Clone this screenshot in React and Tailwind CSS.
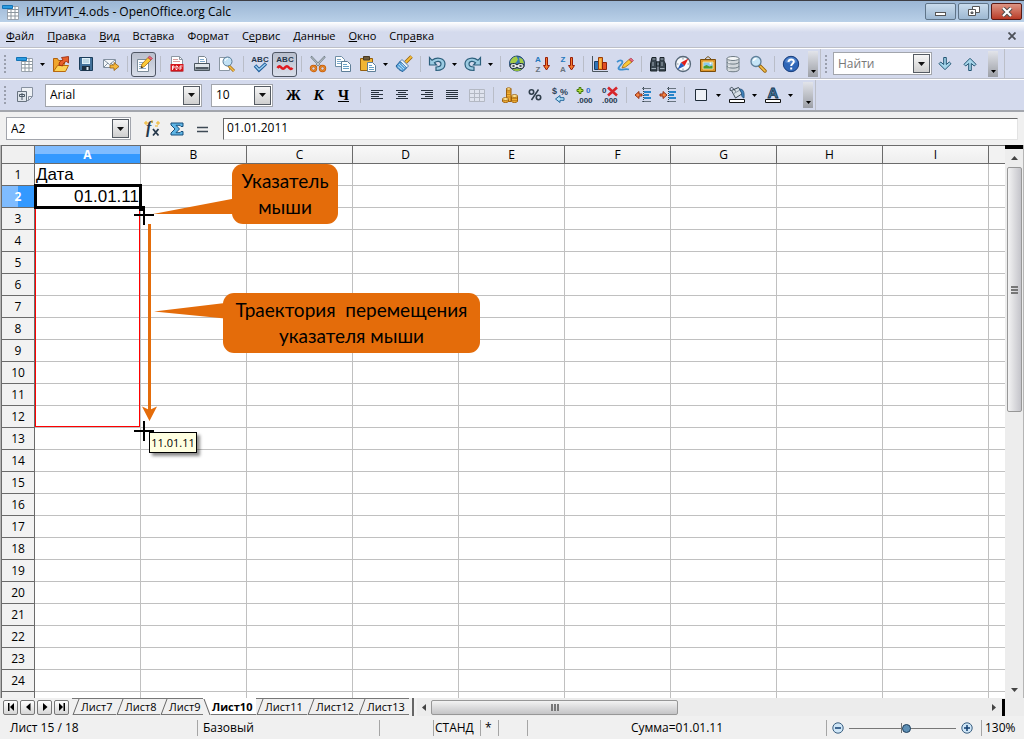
import React from "react";

const Icon = ({ children, size = "size-[18px]" }) => (
  <svg viewBox="0 0 18 18" className={`${size} shrink-0 overflow-visible`} fill="none" aria-hidden="true">
    {children}
  </svg>
);

const Caret = () => (
  <svg viewBox="0 0 7 4" className="h-1 w-[7px] shrink-0" aria-hidden="true">
    <path d="M0 0h7L3.500 4z" fill="#111" />
  </svg>
);

const glyphFont = "Liberation Sans, sans-serif";

const icons = {
  new: (
    <Icon>
      <path d="M5.500 3.500h11v13h-11z" fill="#fff" stroke="#9aa3ad" />
      <path d="M5.500 6.500h11M5.500 9.500h11M5.500 13h11M9 3.500v13M13 3.500v13" stroke="#8d979f" />
      <path d="M.5 2.500h10v3H.5z" fill="#2b9be0" stroke="#1373b5" />
    </Icon>
  ),
  open: (
    <Icon>
      <path d="M1.500 16.500V3.500h4l1 2h6v4" fill="#f0a52b" stroke="#b0600e" />
      <path d="M1.500 16.500l4-6h11l-3 6z" fill="#fcd253" stroke="#b8690f" />
      <path d="M7 10c0-3 1.500-4.500 4-5L9.500 2.500 16.500 1.500v6.500l-2-1.500C12 7 11 8.500 10.500 11z" fill="#e8612a" stroke="#972307" strokeWidth=".8" />
    </Icon>
  ),
  save: (
    <Icon>
      <path d="M2.500 2.500h13v13h-12l-1-1z" fill="#42719a" stroke="#1b3d5a" />
      <path d="M5 3h8v6H5z" fill="#dff0f8" />
      <path d="M6 5h6M6 7h6" stroke="#9ec1d4" />
      <path d="M5 11h8v4.500H5z" fill="#1c2f40" />
      <path d="M9.500 12h2v3h-2z" fill="#dce8ef" />
    </Icon>
  ),
  mail: (
    <Icon>
      <path d="M1.500 4.500h12v8h-12z" fill="#f4f7fa" stroke="#8290a0" />
      <path d="M2 5l5.500 4.500L13 5M2 12l4-4M13 12L9 8" stroke="#8290a0" />
      <path d="M8 10h4V7.500L17 11.500 12 15.500V13H8z" fill="#f6b83c" stroke="#98600e" strokeWidth=".8" />
    </Icon>
  ),
  edit: (
    <Icon>
      <path d="M2.500 4.500h11v12h-11z" fill="#fff" stroke="#7b8b99" />
      <path d="M4 7.500h6M4 9.500h5M4 11.500h4M4 13.500h7" stroke="#8fb0cb" />
      <path d="M6 13l1-4 6-6.500 3 2.500-6.500 6.500z" fill="#fbc938" stroke="#a56a12" strokeWidth=".8" />
      <path d="M13 2.500l1.500-1.500 3 2.500L16 5z" fill="#e8677b" stroke="#a33145" strokeWidth=".6" />
      <path d="M6 13l.6-2 1.500 1.500z" fill="#222" />
    </Icon>
  ),
  pdf: (
    <Icon>
      <path d="M3.500 1.500h8l3 3v12h-11z" fill="#fff" stroke="#8b97a3" />
      <path d="M11.500 1.500v3h3" stroke="#8b97a3" />
      <path d="M5 4.500h5M5 6.500h7" stroke="#d89c9c" />
      <path d="M2.500 9h13v7.500h-13z" fill="#d5151c" />
      <path d="M4.500 15v-4h1.500v2H4.500M8 11v3.500h1l1-1v-1.500l-1-1zM12 15v-4h2.500M12 13h2" stroke="#fff" strokeWidth=".9" />
    </Icon>
  ),
  print: (
    <Icon>
      <path d="M5.500 1.500h6l2 2v6h-8z" fill="#fff" stroke="#7a8691" />
      <path d="M7 4.500h4M7 6.500h5" stroke="#7fa9cc" />
      <path d="M1.500 8.500h15v7h-15z" fill="#8d989f" stroke="#4b565f" />
      <path d="M2 9h14v3H2z" fill="#dfe5e9" />
      <path d="M3 13h12" stroke="#3c464e" strokeWidth="1.500" />
    </Icon>
  ),
  preview: (
    <Icon>
      <path d="M1.500 2.500h10v13h-10z" fill="#fff" stroke="#8b97a3" />
      <path d="M10.500 10.500l5.500 5.500" stroke="#a66e15" strokeWidth="3" />
      <path d="M11 11l5 5" stroke="#f4c04a" strokeWidth="1.500" />
      <circle cx="9.500" cy="6.500" r="4.500" fill="#c2e1f4" stroke="#587a95" />
      <path d="M7 6a3 3 0 013-2.500" stroke="#fff" />
    </Icon>
  ),
  undo: (
    <Icon>
      <path d="M1.500 2.500v7.500h7L6.500 7.700C9 5.500 13 6 13 9c0 2-1.500 3-5 3v3.500c6 0 9-2.500 9-6.500 0-6-8-7.500-13-3.700z" fill="#9ccbe2" stroke="#2c5f7c" strokeWidth="1.200" />
    </Icon>
  ),
  cut: (
    <Icon>
      <path d="M2 1.500l9.500 10M16 1.500l-9.500 10" stroke="#6d7a84" strokeWidth="2" />
      <path d="M2.500 2l9 9.500M15.500 2l-9 9.500" stroke="#eef3f5" strokeWidth=".7" />
      <circle cx="4.500" cy="13.500" r="2.500" stroke="#c65a09" strokeWidth="2.400" />
      <circle cx="13.500" cy="13.500" r="2.500" stroke="#c65a09" strokeWidth="2.400" />
      <circle cx="4.500" cy="13.500" r="2.500" stroke="#f3a13c" strokeWidth=".8" />
      <circle cx="13.500" cy="13.500" r="2.500" stroke="#f3a13c" strokeWidth=".8" />
    </Icon>
  ),
  copy: (
    <Icon>
      <path d="M1.500 1.500h6l3 3v7h-9z" fill="#fff" stroke="#6f8ea6" />
      <path d="M3 4.500h4M3 6.500h5M3 8.500h5" stroke="#79a8c9" />
      <path d="M7.500 6.500h6l3 3v7h-9z" fill="#fff" stroke="#5f7e97" />
      <path d="M9 9.500h4M9 11.500h6M9 13.500h6" stroke="#68a0c6" />
    </Icon>
  ),
  paste: (
    <Icon>
      <path d="M1.500 3.500h12v12h-12z" fill="#f1b534" stroke="#96600f" />
      <path d="M4.500 1.500h6v3.500h-6z" fill="#6d5a3b" stroke="#4a3b22" />
      <path d="M8.500 7.500h5l3 3v6h-8z" fill="#fff" stroke="#5f7e97" />
      <path d="M10 10.500h3M10 12.500h5M10 14.500h5" stroke="#68a0c6" />
    </Icon>
  ),
  brush: (
    <Icon>
      <path d="M16.500 1.500l-6 6" stroke="#95640f" strokeWidth="3.500" />
      <path d="M16.500 1.500l-6 6" stroke="#f6bd39" strokeWidth="1.800" />
      <path d="M7 4.500l6.500 6.500-2 2L5 6.500z" fill="#e7f2fa" stroke="#33679e" strokeWidth=".8" />
      <path d="M5 6.500l6.500 6.500-3.500 3.500c-3-.5-5.500-3-7-5.500z" fill="#5aa5dc" stroke="#235e96" />
      <path d="M4 9l5 5M3 11.500l4 3M6.500 8.500l4 4" stroke="#cfe7f8" strokeWidth=".8" />
    </Icon>
  ),
  globe: (
    <Icon>
      <circle cx="9" cy="8.500" r="7.500" fill="#3978b4" stroke="#1f456c" />
      <path d="M2 7.500C3 3.500 6 1.500 8.500 1.500l1.500 3-2 3-4 1.500zM11 2.500l3.500 1.500 1.700 4.500-4.200-.5z" fill="#a4cb45" />
      <path d="M4 14l5-.5 5 .5-3 2H7z" fill="#8db93c" />
      <rect x="2" y="8.500" width="7" height="5" rx="2.500" fill="#d5dce0" stroke="#222d33" />
      <rect x="9" y="8.500" width="7" height="5" rx="2.500" fill="#d5dce0" stroke="#222d33" />
      <path d="M4.500 11h2M11.500 11h2" stroke="#222d33" strokeWidth="1.500" />
      <path d="M7 11h4" stroke="#fff" strokeWidth="1.500" />
    </Icon>
  ),
  chart: (
    <Icon>
      <path d="M1.500 1v15.500H17" stroke="#4b555d" />
      <path d="M3.500 6.500h4v8h-4z" fill="#2f73b4" stroke="#163f69" />
      <path d="M7.500 2.500h4v12h-4z" fill="#f19b2b" stroke="#9b3d08" />
      <path d="M11.500 7.500h4v7h-4z" fill="#e24f22" stroke="#8f2209" />
      <path d="M9 4v9" stroke="#ffd465" />
    </Icon>
  ),
  draw: (
    <Icon>
      <path d="M1 7c4-3 7-1 4.500 2S1 14 4 14.500s6-1 9 0" stroke="#3d8fcf" strokeWidth="1.800" />
      <path d="M6 13l1.500-3.500L13 4.500l3 2.500L9.500 12z" fill="#fbc938" stroke="#9f6814" strokeWidth=".8" />
      <path d="M13 4.500l2-1.500L17.500 5.500 16 7z" fill="#e7697c" stroke="#a33145" strokeWidth=".6" />
    </Icon>
  ),
  find: (
    <Icon>
      <path d="M3 2.500h4v3l1 1v9.500H1.500V9zM11 2.500h4V6l1.500 3v7H10V6.500l1-1z" fill="#3a4650" stroke="#1b242b" />
      <path d="M7.500 7h3v4h-3z" fill="#6c7c88" stroke="#1b242b" />
      <path d="M3.500 4h3M11.500 4h3M2.500 13.500h4.500M11 13.500h4.500M4 7v4M13 7v4" stroke="#9eabb5" />
    </Icon>
  ),
  compass: (
    <Icon>
      <circle cx="9" cy="9" r="7.500" fill="#f8fafc" stroke="#58697a" strokeWidth="1.300" />
      <path d="M9 2.500v2M9 13.500v2M2.500 9h2M13.500 9h2" stroke="#8793a0" />
      <path d="M14.500 3.500L7 7.500l3.500 3.500z" fill="#e11d17" />
      <path d="M3.500 14.500L7 7.500l3.500 3.500z" fill="#275fbd" />
    </Icon>
  ),
  picture: (
    <Icon>
      <path d="M6 4l3-2.500L12 4" stroke="#705218" />
      <path d="M1.500 4.500h15v12h-15z" fill="#dc962a" stroke="#7b4d0b" />
      <path d="M4 7h10v7H4z" fill="#88c8ef" stroke="#f8df90" />
      <path d="M4.500 13.500v-2l3-1.500 3 1.500 3-1v3z" fill="#4c9b2d" />
      <circle cx="11.500" cy="8.500" r="1" fill="#fff" />
    </Icon>
  ),
  db: (
    <Icon>
      <path d="M3 3.500v11c0 3 12 3 12 0v-11" fill="#d1d7db" stroke="#6f7c85" />
      <ellipse cx="9" cy="3.500" rx="6" ry="2" fill="#f5f7f8" stroke="#6f7c85" />
      <path d="M3 7c0 2.800 12 2.800 12 0M3 11c0 2.800 12 2.800 12 0" stroke="#6f7c85" />
      <path d="M5 7v1.500M5 11v1.500M5 15v1" stroke="#fff" />
    </Icon>
  ),
  zoom: (
    <Icon>
      <path d="M10.500 10.500L16 16" stroke="#98640f" strokeWidth="3.500" strokeLinecap="round" />
      <path d="M11.500 11.500L16 16" stroke="#f5c14b" strokeWidth="1.700" strokeLinecap="round" />
      <circle cx="7" cy="6.500" r="5" fill="#c5e4f6" stroke="#5e7f99" strokeWidth="1.300" />
      <path d="M4.500 6A3 3 0 017.500 3.500" stroke="#fff" strokeWidth="1.300" />
    </Icon>
  ),
  help: (
    <Icon>
      <circle cx="9" cy="9" r="7.700" fill="#2e66b8" stroke="#173c7a" />
      <path d="M3 7a6.200 6.200 0 0112 0c-3 2-8 2-12 0z" fill="#6b9ad8" opacity=".6" />
      <path d="M6.500 7c0-3.500 5.500-3.300 5.300-.2C11.700 8.700 9.200 8.800 9.200 11" stroke="#fff" strokeWidth="2" />
      <path d="M8.200 12.500h2v2h-2z" fill="#fff" />
    </Icon>
  ),
  down: (
    <Icon>
      <path d="M7.700 2.500h2.600v7l3-2.500 1.700 1.700-6 6-6-6L4.700 7l3 2.500z" fill="#a6d5ea" stroke="#235674" />
    </Icon>
  ),
  up: (
    <Icon>
      <path d="M7.700 15.500h2.600v-7l3 2.500 1.700-1.700-6-6-6 6L4.700 11l3-2.500z" fill="#a6d5ea" stroke="#235674" />
    </Icon>
  ),
  styles: (
    <Icon>
      <path d="M5.500 1.500h11v9l-4 4h-7z" fill="#eef1f5" stroke="#8791a0" />
      <path d="M16.500 10.500h-4v4" stroke="#8791a0" />
      <path d="M1.500 5.500h9v10h-9z" fill="#dfe5ec" stroke="#67727e" />
      <path d="M6 7v7M3.500 8.500h5v2h-5z" stroke="#4c5966" />
    </Icon>
  ),
  table: (
    <Icon>
      <path d="M1.500 3.500h15v12h-15zM1.500 7.500h15M1.500 11.500h15M6.500 3.500v12M11.500 3.500v12" fill="#dfe3ee" stroke="#b3b8c3" />
    </Icon>
  ),
  coins: (
    <Icon>
      <path d="M5.500 2.500h4.500v13h-4.500z" fill="#f3b034" stroke="#9c5f0c" />
      <ellipse cx="7.700" cy="3" rx="2.300" ry="1.300" fill="#ffe391" stroke="#9c5f0c" strokeWidth=".8" />
      <path d="M10.500 10v5.500c1 1.300 5 1.300 6 0V10z" fill="#f3b034" stroke="#9c5f0c" />
      <ellipse cx="13.500" cy="10" rx="3" ry="1.500" fill="#ffe391" stroke="#9c5f0c" strokeWidth=".8" />
      <path d="M1.500 13v2.500c1 1.300 5 1.300 6 0V13z" fill="#f3b034" stroke="#9c5f0c" />
      <ellipse cx="4.500" cy="13" rx="3" ry="1.500" fill="#ffe391" stroke="#9c5f0c" strokeWidth=".8" />
      <path d="M6 6h4M6 8.500h4M6 11h4M11 12.500h5M11 14.500h5" stroke="#b97a16" strokeWidth=".8" />
    </Icon>
  ),
  percent: (
    <Icon>
      <circle cx="5.500" cy="6" r="2.200" stroke="#2f3d4a" strokeWidth="1.600" />
      <circle cx="12.500" cy="11.500" r="2.200" stroke="#2f3d4a" strokeWidth="1.600" />
      <path d="M12.500 3.500l-7 10.500" stroke="#2f3d4a" strokeWidth="1.500" />
    </Icon>
  ),
  border: (
    <Icon>
      <path d="M3.500 3.500h11v11h-11z" fill="#eef1f7" stroke="#1f2b38" />
    </Icon>
  ),
  fill: (
    <Icon>
      <path d="M3.500 4.500l7-3 4 6-7 4.500z" fill="#d8e0e6" stroke="#384752" />
      <path d="M5 8L12 4" stroke="#8b98a3" />
      <path d="M7.500 5.500C4-1 1 1.500 2.500 5" stroke="#384752" />
      <path d="M11.500 3c4 0 5 3 4.500 9-2-.5-2.500-2-2.500-5z" fill="#3f83bd" stroke="#224f78" strokeWidth=".8" />
      <path d="M1.500 13.500h15v3h-15z" fill="#fff" stroke="#111" />
    </Icon>
  ),
};

const IconButton = ({ label, children, pressed = false }) => (
  <button
    type="button"
    aria-label={label}
    className={
      pressed
        ? "flex size-[25px] shrink-0 items-center justify-center rounded-[3px] border border-[#4f5664] bg-gradient-to-b from-[#b9bfcd] to-[#d9deea]"
        : "flex size-[25px] shrink-0 items-center justify-center"
    }
  >
    {children}
  </button>
);

const CaretButton = ({ label }) => (
  <button type="button" aria-label={label} className="flex h-6 w-[11px] shrink-0 items-center justify-center">
    <svg viewBox="0 0 5 3" className="h-[3px] w-[5px] shrink-0" aria-hidden="true">
      <path d="M0 0h5L2.500 3z" fill="#000" />
    </svg>
  </button>
);

const Sep = () => (
  <span className="flex w-2 shrink-0 justify-center">
    <span className="h-4 w-px bg-[#b9bdc8]" />
  </span>
);

const Grip = () => (
  <span className="ml-1 flex w-2 shrink-0 flex-col gap-0.5">
    {[0, 1, 2, 3, 4].map((n) => (
      <span key={n} className="size-0.5 bg-[#9a9fad]" />
    ))}
  </span>
);

const More = ({ label }) => (
  <button
    type="button"
    aria-label={label}
    className="flex h-[26px] w-[10px] shrink-0 items-end justify-center bg-gradient-to-b from-[#e2e4ea] to-[#9c9fa6] pb-1"
  >
    <svg viewBox="0 0 5 3" className="h-[3px] w-[5px]" aria-hidden="true">
      <path d="M0 0h5L2.500 3z" fill="#000" />
    </svg>
  </button>
);

const Combo = ({ label, value, placeholder, width }) => (
  <div className={`${width} flex h-[23px] shrink-0 items-stretch border border-[#a2a5ac] bg-white p-px`}>
    <input
      aria-label={label}
      defaultValue={value}
      placeholder={placeholder}
      className="min-w-0 flex-1 bg-white px-[3px] placeholder:text-[#777]"
    />
    <button
      type="button"
      aria-label={`${label}: список`}
      className="flex w-[17px] shrink-0 items-center justify-center border border-[#555b63] bg-gradient-to-b from-[#f6f6f6] to-[#cfcfcf]"
    >
      <Caret />
    </button>
  </div>
);

const Abc = ({ wavy }) => (
  <Icon>
    <text x="9" y="7" textAnchor="middle" fontSize="8" fontWeight="700" fontFamily={glyphFont} fill="#26384c">
      ABC
    </text>
    {wavy ? (
      <path d="M1.500 13q1.800-3 3.700-.5t3.800 0 3.800 0 3.700.5" stroke="#e0191f" strokeWidth="2.600" />
    ) : (
      <path d="M4 10.500l4 4.500L15 8.500" stroke="#225f9c" strokeWidth="3.400" />
    )}
    {!wavy && <path d="M4.500 11l3.500 3.700L14.500 9" stroke="#9fd2f4" strokeWidth="1.400" />}
  </Icon>
);

const Sort = ({ a, b }) => (
  <Icon>
    <text x="5" y="7" textAnchor="middle" fontSize="8" fontWeight="700" fontFamily={glyphFont} fill="#2478bd">
      {a}
    </text>
    <text x="5" y="17" textAnchor="middle" fontSize="8" fontWeight="700" fontFamily={glyphFont} fill="#68727c">
      {b}
    </text>
    <path d="M12.500 2.500h2v8h2L13.500 15l-3-4.500h2z" fill="#f47a2b" stroke="#981d08" />
  </Icon>
);

const Align = ({ lines }) => (
  <Icon>
    <path d={lines} stroke="#26303c" />
  </Icon>
);

const Indent = ({ right }) => (
  <Icon>
    <path d="M8 2.500h9M8 15.500h9" stroke="#68737f" />
    <path d="M10 6h7M10 9h5M10 12h7" stroke="#2784c9" strokeWidth="2" />
    <path
      d={right ? "M1 8h3V5.500L8 9l-4 3.500V10H1z" : "M8 8H5V5.500L1 9l4 3.500V10h3z"}
      fill="#f28345"
      stroke="#8c2408"
      strokeWidth=".9"
    />
    <path d="M9.500 1v16" stroke="#33404c" strokeDasharray="1 1" />
  </Icon>
);

const Digits = ({ remove }) => (
  <Icon>
    <text x="1" y="17" fontSize="8" fontWeight="700" fontFamily={glyphFont} fill="#25394e">
      .000
    </text>
    <text x={remove ? "1" : "10"} y="7" fontSize="8" fontWeight="700" fontFamily={glyphFont} fill={remove ? "#25394e" : "#2f6dcf"}>
      0
    </text>
    {remove ? (
      <path d="M7 1.500l9 8M16 1.500l-9 8" stroke="#d7262b" strokeWidth="2.600" />
    ) : (
      <path d="M3 1.500h2v2h2v2H5v2H3v-2H1v-2h2z" fill="#b9df3a" stroke="#467b12" />
    )}
  </Icon>
);

const menus = [
  ["", "Ф", "айл"],
  ["", "П", "равка"],
  ["", "В", "ид"],
  ["Вст", "а", "вка"],
  ["Фо", "р", "мат"],
  ["С", "е", "рвис"],
  ["", "Д", "анные"],
  ["", "О", "кно"],
  ["Спр", "а", "вка"],
];

const columns = ["A", "B", "C", "D", "E", "F", "G", "H", "I"];
const rows = Array.from({ length: 24 }, (_, i) => i + 1);

const sheets = [
  { name: "Лист7", width: "w-11" },
  { name: "Лист8", width: "w-11" },
  { name: "Лист9", width: "w-[43px]" },
  { name: "Лист10", width: "w-[53px]", active: true },
  { name: "Лист11", width: "w-[51px]" },
  { name: "Лист12", width: "w-[51px]" },
  { name: "Лист13", width: "w-[51px]" },
];

const navShapes = [
  ["Первый лист", "M3 2h1.500v8H3zM9 2v8L5 6z"],
  ["Предыдущий лист", "M8.500 2v8L4 6z"],
  ["Следующий лист", "M4 2v8l4.500-4z"],
  ["Последний лист", "M3 2v8l4-4zM7.500 2H9v8H7.500z"],
];

function TitleBar() {
  const base = "flex h-[17px] items-center justify-center rounded-[2px] border";
  return (
    <header className="flex h-[22px] items-center border-t border-[#3d3d42] bg-gradient-to-b from-[#9bb6d4] to-[#b9d0e8] pl-0.5">
      <span className="flex w-6">{icons.new}</span>
      <h1 className="flex-1">ИНТУИТ_4.ods - OpenOffice.org Calc</h1>
      <div className="flex gap-0.5 pr-0.5">
        <button type="button" aria-label="Свернуть" className={`${base} w-[31px] border-[#5f7488] bg-gradient-to-b from-[#c9dbec] to-[#9db8d2]`}>
          <span className="mt-1 h-1 w-[11px] border border-[#555] bg-white" />
        </button>
        <button type="button" aria-label="Восстановить" className={`${base} w-[31px] border-[#5f7488] bg-gradient-to-b from-[#c9dbec] to-[#9db8d2]`}>
          <svg viewBox="0 0 12 11" className="h-[11px] w-3" fill="#fff" stroke="#555" aria-hidden="true">
            <path d="M4.500.5h7v6h-7z" />
            <path d="M.5 3.500h7v6h-7z" />
            <path d="M3 6h2v1.500H3z" fill="#89a" />
          </svg>
        </button>
        <button type="button" aria-label="Закрыть" className={`${base} w-[31px] border-[#5a1a14] bg-gradient-to-b from-[#dc9484] to-[#b93a26]`}>
          <svg viewBox="0 0 12 10" className="h-[10px] w-3" aria-hidden="true">
            <path d="M2 1l8 8M10 1L2 9" stroke="#4a4a4a" strokeWidth="4" />
            <path d="M2 1l8 8M10 1L2 9" stroke="#fff" strokeWidth="2.200" />
          </svg>
        </button>
      </div>
    </header>
  );
}

function StandardToolbar() {
  return (
    <div role="toolbar" aria-label="Стандартная" className="flex h-[31px] items-center border-t border-white">
      <Grip />
      <IconButton label="Создать">{icons.new}</IconButton>
      <CaretButton label="Создать: список" />
      <IconButton label="Открыть">{icons.open}</IconButton>
      <IconButton label="Сохранить">{icons.save}</IconButton>
      <IconButton label="Отправить">{icons.mail}</IconButton>
      <Sep />
      <IconButton label="Редактировать" pressed>{icons.edit}</IconButton>
      <Sep />
      <IconButton label="Экспорт в PDF">{icons.pdf}</IconButton>
      <IconButton label="Печать">{icons.print}</IconButton>
      <IconButton label="Предварительный просмотр">{icons.preview}</IconButton>
      <Sep />
      <IconButton label="Проверка орфографии"><Abc /></IconButton>
      <IconButton label="Автопроверка" pressed><Abc wavy /></IconButton>
      <Sep />
      <IconButton label="Вырезать">{icons.cut}</IconButton>
      <IconButton label="Копировать">{icons.copy}</IconButton>
      <IconButton label="Вставить">{icons.paste}</IconButton>
      <CaretButton label="Вставить: список" />
      <IconButton label="Формат по образцу">{icons.brush}</IconButton>
      <Sep />
      <IconButton label="Отменить">{icons.undo}</IconButton>
      <CaretButton label="Отменить: список" />
      <IconButton label="Вернуть"><span className="-scale-x-100">{icons.undo}</span></IconButton>
      <CaretButton label="Вернуть: список" />
      <Sep />
      <IconButton label="Гиперссылка">{icons.globe}</IconButton>
      <IconButton label="Сортировка по возрастанию"><Sort a="A" b="Z" /></IconButton>
      <IconButton label="Сортировка по убыванию"><Sort a="Z" b="A" /></IconButton>
      <Sep />
      <IconButton label="Диаграмма">{icons.chart}</IconButton>
      <IconButton label="Рисунок">{icons.draw}</IconButton>
      <Sep />
      <IconButton label="Найти и заменить">{icons.find}</IconButton>
      <IconButton label="Навигатор">{icons.compass}</IconButton>
      <IconButton label="Галерея">{icons.picture}</IconButton>
      <IconButton label="Источники данных">{icons.db}</IconButton>
      <IconButton label="Масштаб">{icons.zoom}</IconButton>
      <Sep />
      <IconButton label="Справка">{icons.help}</IconButton>
      <div className="flex h-full items-center border-r border-[#bcbfc8] pr-0.5 pl-[5px]">
        <More label="Ещё" />
      </div>
      <div className="flex h-full items-center border-r border-b border-[#bcbfc8]">
        <Grip />
        <Combo label="Поиск" placeholder="Найти" width="w-[99px]" />
        <IconButton label="Найти следующее">{icons.down}</IconButton>
        <IconButton label="Найти предыдущее">{icons.up}</IconButton>
        <div className="px-1.5">
          <More label="Ещё" />
        </div>
      </div>
    </div>
  );
}

function FormatToolbar() {
  return (
    <div role="toolbar" aria-label="Форматирование" className="flex h-[31px] items-center border-t border-white shadow-[0_-1px_0_#bcbfc8]">
      <Grip />
      <IconButton label="Стили">{icons.styles}</IconButton>
      <div className="flex gap-[9px] px-2">
        <Combo label="Шрифт" value="Arial" width="w-[157px]" />
        <Combo label="Размер" value="10" width="w-[62px]" />
      </div>
      <IconButton label="Полужирный"><span className="font-['Liberation_Serif',serif] text-[15px] font-bold">Ж</span></IconButton>
      <IconButton label="Курсив"><span className="font-['Liberation_Serif',serif] text-[15px] font-bold italic">К</span></IconButton>
      <IconButton label="Подчёркнутый"><span className="font-['Liberation_Serif',serif] text-[15px] font-bold underline">Ч</span></IconButton>
      <Sep />
      <IconButton label="По левому краю"><Align lines="M3 4.500h12M3 6.500h8M3 8.500h12M3 10.500h8M3 12.500h12" /></IconButton>
      <IconButton label="По центру"><Align lines="M3 4.500h12M5 6.500h8M3 8.500h12M5 10.500h8M3 12.500h12" /></IconButton>
      <IconButton label="По правому краю"><Align lines="M3 4.500h12M7 6.500h8M3 8.500h12M7 10.500h8M3 12.500h12" /></IconButton>
      <IconButton label="По ширине"><Align lines="M3 4.500h12M3 6.500h12M3 8.500h12M3 10.500h12M3 12.500h12" /></IconButton>
      <IconButton label="Объединить ячейки">{icons.table}</IconButton>
      <Sep />
      <IconButton label="Денежный формат">{icons.coins}</IconButton>
      <IconButton label="Процентный формат">{icons.percent}</IconButton>
      <IconButton label="Стандартный формат">
        <Icon>
          <text x="1" y="7.500" fontSize="9" fontWeight="700" fontFamily={glyphFont} fill="#2c4258">$</text>
          <text x="9" y="8.500" fontSize="9" fontWeight="700" fontFamily={glyphFont} fill="#2c4258">%</text>
          <path d="M13 11.700H9V9.500L4.500 13 9 16.500v-2.200h4z" fill="#b5e2f7" stroke="#20669b" />
        </Icon>
      </IconButton>
      <IconButton label="Добавить разряд"><Digits /></IconButton>
      <IconButton label="Удалить разряд"><Digits remove /></IconButton>
      <Sep />
      <IconButton label="Уменьшить отступ"><Indent /></IconButton>
      <IconButton label="Увеличить отступ"><Indent right /></IconButton>
      <Sep />
      <IconButton label="Обрамление">{icons.border}</IconButton>
      <CaretButton label="Обрамление: список" />
      <IconButton label="Цвет фона">{icons.fill}</IconButton>
      <CaretButton label="Цвет фона: список" />
      <IconButton label="Цвет шрифта">
        <Icon>
          <text x="9" y="12" textAnchor="middle" fontSize="15" fontWeight="700" fontFamily={glyphFont} fill="#4683b0" stroke="#1b3850" strokeWidth=".9">A</text>
          <path d="M1.500 13.500h15v3h-15z" fill="#fff" stroke="#111" />
        </Icon>
      </IconButton>
      <CaretButton label="Цвет шрифта: список" />
      <div className="flex h-full items-center border-r border-[#bcbfc8] pr-0.5 pl-[7px]">
        <More label="Ещё" />
      </div>
    </div>
  );
}

function FormulaBar() {
  return (
    <div className="flex h-[33px] items-center bg-[#f0f0f0] pr-1.5 pl-1.5">
      <Combo label="Область листа" value="A2" width="w-[125px]" />
      <div className="flex pr-[9px] pl-2">
        <IconButton label="Мастер функций">
          <Icon>
            <text x="3" y="13" fontSize="16" fontStyle="italic" fontWeight="700" fontFamily="Liberation Serif, serif" fill="#26384a">f</text>
            <path d="M10 9l5.500 6.500M15.500 9L10 15.500" stroke="#26384a" strokeWidth="1.800" />
            <path d="M3 1v4M1 3h4M9 0v3M15 1v4M13 3h4M12 6h3" stroke="#f1b521" />
          </Icon>
        </IconButton>
        <IconButton label="Сумма">
          <Icon>
            <path d="M3 3h12v3.500h-2l-1-1.200H8L11.500 9 8 12.700h4l1-1.200h2V15H3v-2l4-4-4-4z" fill="#5fb6e6" stroke="#174f7c" />
          </Icon>
        </IconButton>
        <IconButton label="Функция">
          <Icon>
            <path d="M4 7.500h11M4 11.500h11" stroke="#3e4a55" strokeWidth="1.600" />
          </Icon>
        </IconButton>
      </div>
      <input
        aria-label="Строка ввода"
        defaultValue="01.01.2011"
        className="h-[22px] min-w-0 flex-1 border border-t-[#696969] border-r-[#e3e3e3] border-b-[#e3e3e3] border-l-[#696969] bg-white px-[3px] pb-0.5"
      />
    </div>
  );
}

function Sheet() {
  return (
    <div className="relative min-w-0 flex-1 overflow-hidden bg-white">
      <table className="w-full table-fixed border-separate border-spacing-0">
        <thead>
          <tr className="h-[19px]">
            <th aria-label="Выделить всё" className="w-[34px] border-y border-r border-l border-[#6b6b6b] bg-[#f0f0f0] p-0" />
            {columns.map((c) => (
              <th
                key={c}
                scope="col"
                className={
                  c === "A"
                    ? "w-[106px] border-y border-r border-[#6b6b6b] bg-gradient-to-b from-[#7fbcff] from-50% to-[#3399ff] to-50% p-0 leading-4 font-bold text-white"
                    : "w-[106px] border-y border-r border-[#6b6b6b] bg-gradient-to-b from-[#f8f8f8] to-[#eeeeee] p-0 leading-4 font-normal"
                }
              >
                {c}
              </th>
            ))}
            <th aria-label="J" className="border-y border-[#6b6b6b] bg-[#f2f2f2] p-0" />
          </tr>
        </thead>
        <tbody>
          {rows.map((r) => (
            <tr key={r} className="h-[22px]">
              <th
                scope="row"
                className={
                  r === 2
                    ? "border-x border-b border-[#6b6b6b] bg-gradient-to-r from-[#7fbcff] from-50% to-[#3399ff] to-50% p-0 leading-4 font-bold text-white"
                    : "border-x border-b border-[#6b6b6b] bg-[#f2f2f2] p-0 leading-4 font-normal"
                }
              >
                {r}
              </th>
              {columns.map((c) => (
                <td
                  key={c}
                  className={
                    r === 2
                      ? "border-r border-b border-[#c0c0c0] p-0 pr-px text-right font-['Liberation_Sans',sans-serif] text-[17px] leading-5"
                      : "border-r border-b border-[#c0c0c0] p-0 pl-px text-left font-['Liberation_Sans',sans-serif] text-[17px] leading-5"
                  }
                >
                  {c === "A" && r === 1 ? "Дата" : c === "A" && r === 2 ? "01.01.11" : ""}
                </td>
              ))}
              <td className="border-b border-[#c0c0c0] p-0" />
            </tr>
          ))}
          <tr className="h-1.5">
            <th aria-label="25" className="border-x border-[#6b6b6b] bg-[#f2f2f2] p-0" />
            {columns.map((c) => (
              <td key={c} className="border-r border-[#c0c0c0] p-0" />
            ))}
            <td className="p-0" />
          </tr>
        </tbody>
      </table>

      <div className="absolute top-[62px] left-[34px] h-[220px] w-[105px] border border-[#ff0000]" />
      <div className="absolute top-[39px] left-[33px] h-[25px] w-[108px] border-[3px] border-black" />
      <svg viewBox="0 0 500 320" className="absolute top-0 left-0 h-[320px] w-[500px]" aria-hidden="true">
        <path d="M138 61h5v5h-5z" fill="#000" />
        <path d="M133 69h20v2h-20zM142 61h2v19h-2zM133 285h20v2h-20zM142 276h2v20h-2z" fill="#000" />
        <path d="M152 69L236 53v16zM153 166.500L224 158v15.500z" fill="#e46c0a" />
        <path d="M147 79h3v186h-3z" fill="#e46c0a" />
        <path d="M148.500 276L141 261.500l7.500 3.500 7.500-3.500z" fill="#e46c0a" />
      </svg>
      <div className="absolute top-[19px] left-[231px] flex h-[60px] w-[106px] items-center justify-center rounded-[11px] bg-[#e46c0a] text-center font-['Lato',sans-serif] text-[19px] leading-[26px]">
        Указатель
        <br />
        мыши
      </div>
      <div className="absolute top-[148px] left-[222px] flex h-[60px] w-[257px] items-center justify-center rounded-[11px] bg-[#e46c0a] text-center font-['Lato',sans-serif] text-[19px] leading-[26px] whitespace-pre">
        {"Траектория  перемещения\nуказателя мыши"}
      </div>
      <div role="tooltip" className="absolute top-[287px] left-[148px] flex h-[21px] w-12 items-center justify-center border border-black bg-[#ffffe1] text-[11px] shadow-[3px_3px_3px_rgba(0,0,0,0.45)]">
        11.01.11
      </div>
    </div>
  );
}

function VerticalScroll() {
  return (
    <div className="flex w-[18px] shrink-0 flex-col items-center border-t-4 border-black bg-[#ededed]">
      <button type="button" aria-label="Вверх" className="flex h-[18px] w-full items-center justify-center">
        <svg viewBox="0 0 7 4" className="h-1 w-[7px]" aria-hidden="true"><path d="M3.500 0L7 4H0z" fill="#444" /></svg>
      </button>
      <div className="flex h-[245px] w-[15px] flex-col items-center justify-center gap-px rounded-[2px] border border-[#979797] bg-gradient-to-r from-[#f3f3f3] to-[#c4c4ca]">
        <span className="h-0.5 w-[7px] bg-[#777]" />
        <span className="h-0.5 w-[7px] bg-[#777]" />
        <span className="h-0.5 w-[7px] bg-[#777]" />
      </div>
      <span className="flex-1" />
      <button type="button" aria-label="Вниз" className="flex h-4 w-full items-center justify-center">
        <svg viewBox="0 0 7 4" className="h-1 w-[7px]" aria-hidden="true"><path d="M0 0h7L3.500 4z" fill="#444" /></svg>
      </button>
    </div>
  );
}

function SheetTabs() {
  return (
    <div className="flex h-[18px] items-stretch bg-[#f0f0f0]">
      <div className="flex items-center gap-0.5 pr-[3px] pl-[3px]">
        {navShapes.map(([label, d]) => (
          <button key={label} type="button" aria-label={label} className="flex size-[15px] items-center justify-center rounded-[2px] border border-[#777] bg-gradient-to-b from-white to-[#d6d6d6]">
            <svg viewBox="0 0 12 12" className="size-3 shrink-0" aria-hidden="true"><path d={d} fill="#000" /></svg>
          </button>
        ))}
      </div>
      <div role="tablist" aria-label="Листы" className="flex h-[17px] border-b border-[#777]">
        {sheets.map((s) => (
          <button
            key={s.name}
            type="button"
            role="tab"
            aria-selected={!!s.active}
            className={`${s.width} ${s.active ? "border-white bg-white font-bold" : "border-[#777]"} flex shrink-0 items-center border-t text-[11px] leading-4`}
          >
            <svg viewBox="0 0 9 16" className="h-4 w-[9px] shrink-0" fill="none" aria-hidden="true">
              <path d={s.active ? "M0 0h2l6 16H0z" : "M0 0h7L1 16H0z"} fill="#f0f0f0" />
              <path d={s.active ? "M1 0l6 16" : "M7 0L1 16"} stroke="#666" />
            </svg>
            <span className="whitespace-nowrap">{s.name}</span>
          </button>
        ))}
      </div>
      <span className="mr-[3px] w-[5px] border-r-2 border-[#666]" />
      <div className="flex flex-1 items-center bg-[#ececec]">
        <button type="button" aria-label="Влево" className="flex w-3.5 items-center justify-center">
          <svg viewBox="0 0 4 7" className="h-[7px] w-1" aria-hidden="true"><path d="M4 0v7L0 3.500z" fill="#444" /></svg>
        </button>
        <div className="flex h-[15px] w-[247px] items-center justify-center gap-px rounded-[2px] border border-[#979797] bg-gradient-to-b from-[#f3f3f3] to-[#c4c4c6]">
          <span className="h-[7px] w-0.5 bg-[#777]" />
          <span className="h-[7px] w-0.5 bg-[#777]" />
          <span className="h-[7px] w-0.5 bg-[#777]" />
        </div>
        <span className="flex-1" />
        <button type="button" aria-label="Вправо" className="flex w-4 items-center justify-center">
          <svg viewBox="0 0 4 7" className="h-[7px] w-1" aria-hidden="true"><path d="M0 0v7l4-3.500z" fill="#444" /></svg>
        </button>
        <span className="mr-[19px] h-[17px] w-[3px] bg-black" />
      </div>
    </div>
  );
}

function StatusBar() {
  return (
    <footer className="flex h-6 items-center border-b border-[#16203a] bg-[#f0f0f0] pt-px">
      <span className="w-[197px] pl-2.5">Лист 15 / 18</span>
      <span className="w-[182px] border-l border-[#a5a5a5] pl-[5px] leading-4">Базовый</span>
      <span className="h-4 w-[54px] border-l border-[#a5a5a5]" />
      <span className="w-[47px] border-l border-[#a5a5a5] pl-px leading-4">СТАНД</span>
      <span className="w-[18px] border-l border-[#a5a5a5] pl-1 leading-4">*</span>
      <span className="h-4 w-[29px] border-l border-[#a5a5a5]" />
      <span className="flex-1 border-l border-[#a5a5a5] text-center leading-4">Сумма=01.01.11</span>
      <div className="flex items-center gap-[5px] border-l border-[#a5a5a5] pl-[5px]">
        <button type="button" aria-label="Уменьшить масштаб" className="flex">
          <svg viewBox="0 0 12 12" className="size-3" aria-hidden="true">
            <circle cx="6" cy="6" r="5.200" fill="#cfe6f7" stroke="#3b5f80" />
            <path d="M3 6h6" stroke="#123e70" strokeWidth="1.500" />
          </svg>
        </button>
        <div className="relative flex h-4 w-[107px] items-center">
          <span className="absolute top-[3px] left-[52px] h-2.5 w-px bg-[#777]" />
          <input
            type="range"
            aria-label="Масштаб"
            min="0"
            max="100"
            defaultValue="54"
            className="relative h-4 w-full appearance-none bg-transparent [&::-webkit-slider-runnable-track]:h-px [&::-webkit-slider-runnable-track]:bg-[#777] [&::-webkit-slider-thumb]:-mt-1 [&::-webkit-slider-thumb]:size-[9px] [&::-webkit-slider-thumb]:appearance-none [&::-webkit-slider-thumb]:rounded-full [&::-webkit-slider-thumb]:border [&::-webkit-slider-thumb]:border-[#1e3f5c] [&::-webkit-slider-thumb]:bg-[#5d8fb5]"
          />
        </div>
        <button type="button" aria-label="Увеличить масштаб" className="flex">
          <svg viewBox="0 0 12 12" className="size-3" aria-hidden="true">
            <circle cx="6" cy="6" r="5.200" fill="#cfe6f7" stroke="#3b5f80" />
            <path d="M3 6h6M6 3v6" stroke="#123e70" strokeWidth="1.500" />
          </svg>
        </button>
      </div>
      <span className="ml-2 w-[43px] border-l border-[#a5a5a5] pl-[3px] leading-4">130%</span>
    </footer>
  );
}

export default function App() {
  return (
    <div className="flex min-h-screen flex-col overflow-hidden bg-[#f0f0f0] font-['Open_Sans',sans-serif] text-[12px] leading-4 text-black">
      <TitleBar />
      <div className="flex h-[26px] items-center justify-between border-b border-[#bcbfc8] bg-gradient-to-b from-white to-[#d4daed] to-40% pt-0.5 pr-2 pl-1.5">
        <nav aria-label="Главное меню" className="flex gap-[13px] text-[11px]">
          {menus.map(([before, key, after]) => (
            <button key={before + key + after} type="button">
              {before}
              <span className="underline">{key}</span>
              {after}
            </button>
          ))}
        </nav>
        <button type="button" aria-label="Закрыть документ">
          <svg viewBox="0 0 8 8" className="size-2" aria-hidden="true">
            <path d="M.5.5l7 7M7.500.5l-7 7" stroke="#4c5058" strokeWidth="1.800" />
          </svg>
        </button>
      </div>
      <div className="overflow-hidden border-b-2 border-[#a3a6ad] bg-[#d4daed]">
        <StandardToolbar />
        <FormatToolbar />
      </div>
      <FormulaBar />
      <main className="flex border-x border-[#b5b5b5]">
        <Sheet />
        <VerticalScroll />
      </main>
      <SheetTabs />
      <StatusBar />
    </div>
  );
}
